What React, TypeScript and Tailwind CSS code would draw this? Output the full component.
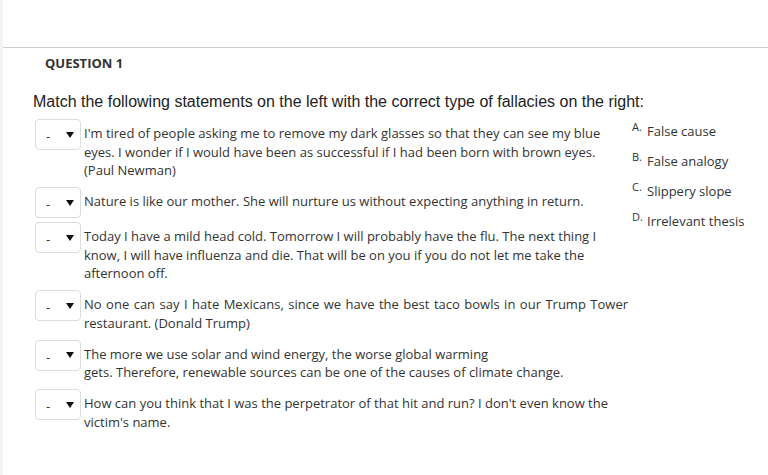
import React from "react";

const rows: { lines: string[]; ws?: string[] }[] = [
  {
    lines: [
      "I'm tired of people asking me to remove my dark glasses so that they can see my blue",
      "eyes. I wonder if I would have been as successful if I had been born with brown eyes.",
      "(Paul Newman)",
    ],
  },
  { lines: ["Nature is like our mother. She will nurture us without expecting anything in return."] },
  {
    lines: [
      "Today I have a mild head cold. Tomorrow I will probably have the flu. The next thing I",
      "know, I will have influenza and die. That will be on you if you do not let me take the",
      "afternoon off.",
    ],
  },
  {
    lines: [
      "No one can say I hate Mexicans, since we have the best taco bowls in our Trump Tower",
      "restaurant. (Donald Trump)",
    ],
    ws: ["1.1px", "0px"],
  },
  {
    lines: [
      "The more we use solar and wind energy, the worse global warming",
      "gets. Therefore, renewable sources can be one of the causes of climate change.",
    ],
  },
  {
    lines: [
      "How can you think that I was the perpetrator of that hit and run? I don't even know the",
      "victim's name.",
    ],
  },
];

const answers = [
  ["A.", "False cause"],
  ["B.", "False analogy"],
  ["C.", "Slippery slope"],
  ["D.", "Irrelevant thesis"],
];

function Select() {
  return (
    <div className="shrink-0 w-[46px] h-[31px] border border-[#dcdcdc] rounded-[4px] bg-white flex items-center pl-[10px] pr-[5px]">
      <span className="text-[13px] leading-none text-[#333] mt-[4px]">-</span>
      <svg className="ml-auto mr-[1px]" width="8" height="6" viewBox="0 0 8 6">
        <path d="M0 0 L8 0 L4 6 Z" fill="#111" />
      </svg>
    </div>
  );
}

export default function App() {
  return (
    <div
      className="w-[768px] h-[475px] bg-white flex overflow-hidden text-[#333]"
      style={{ fontFamily: "'Open Sans', 'Liberation Sans', sans-serif" }}
    >
      <div className="w-[3px] shrink-0 bg-[#f3f3f3]" />
      <div className="flex-1 flex flex-col">
        <div className="h-[48px] shrink-0 border-b border-[#cfcfcf]" />
        <div className="pl-[42px] pt-[6px] h-[18px] box-content text-[13px] leading-[18px] font-bold text-[#333]">
          QUESTION 1
        </div>
        <div
          className="pl-[30px] mt-[20px] text-[16px] leading-[20px] text-[#222]"
          style={{ fontFamily: "'Liberation Sans', Arial, sans-serif" }}
        >
          Match the following statements on the left with the correct type of fallacies on the right:
        </div>
        <div className="flex mt-[7px]">
          <div className="w-[629px] pl-[32px] shrink-0 flex flex-col">
            {rows.map((r, i) => (
              <div key={i} className="flex items-start mb-[4px]">
                <Select />
                <div className="ml-[3px] pt-[5px] pb-[3.5px] text-[13px] leading-[18.5px] whitespace-nowrap text-[#333]">
                  {r.lines.map((l, j) => (
                    <div key={j} style={r.ws ? { wordSpacing: r.ws[j] } : undefined}>
                      {l}
                    </div>
                  ))}
                </div>
              </div>
            ))}
          </div>
          <div className="flex flex-col -mt-[2px]">
            {answers.map(([k, v]) => (
              <div key={k} className="h-[30px] flex items-center text-[13px] text-[#333]">
                <span className="text-[11px] leading-none -mt-[12px] w-[15px]">{k}</span>
                <span>{v}</span>
              </div>
            ))}
          </div>
        </div>
      </div>
    </div>
  );
}
